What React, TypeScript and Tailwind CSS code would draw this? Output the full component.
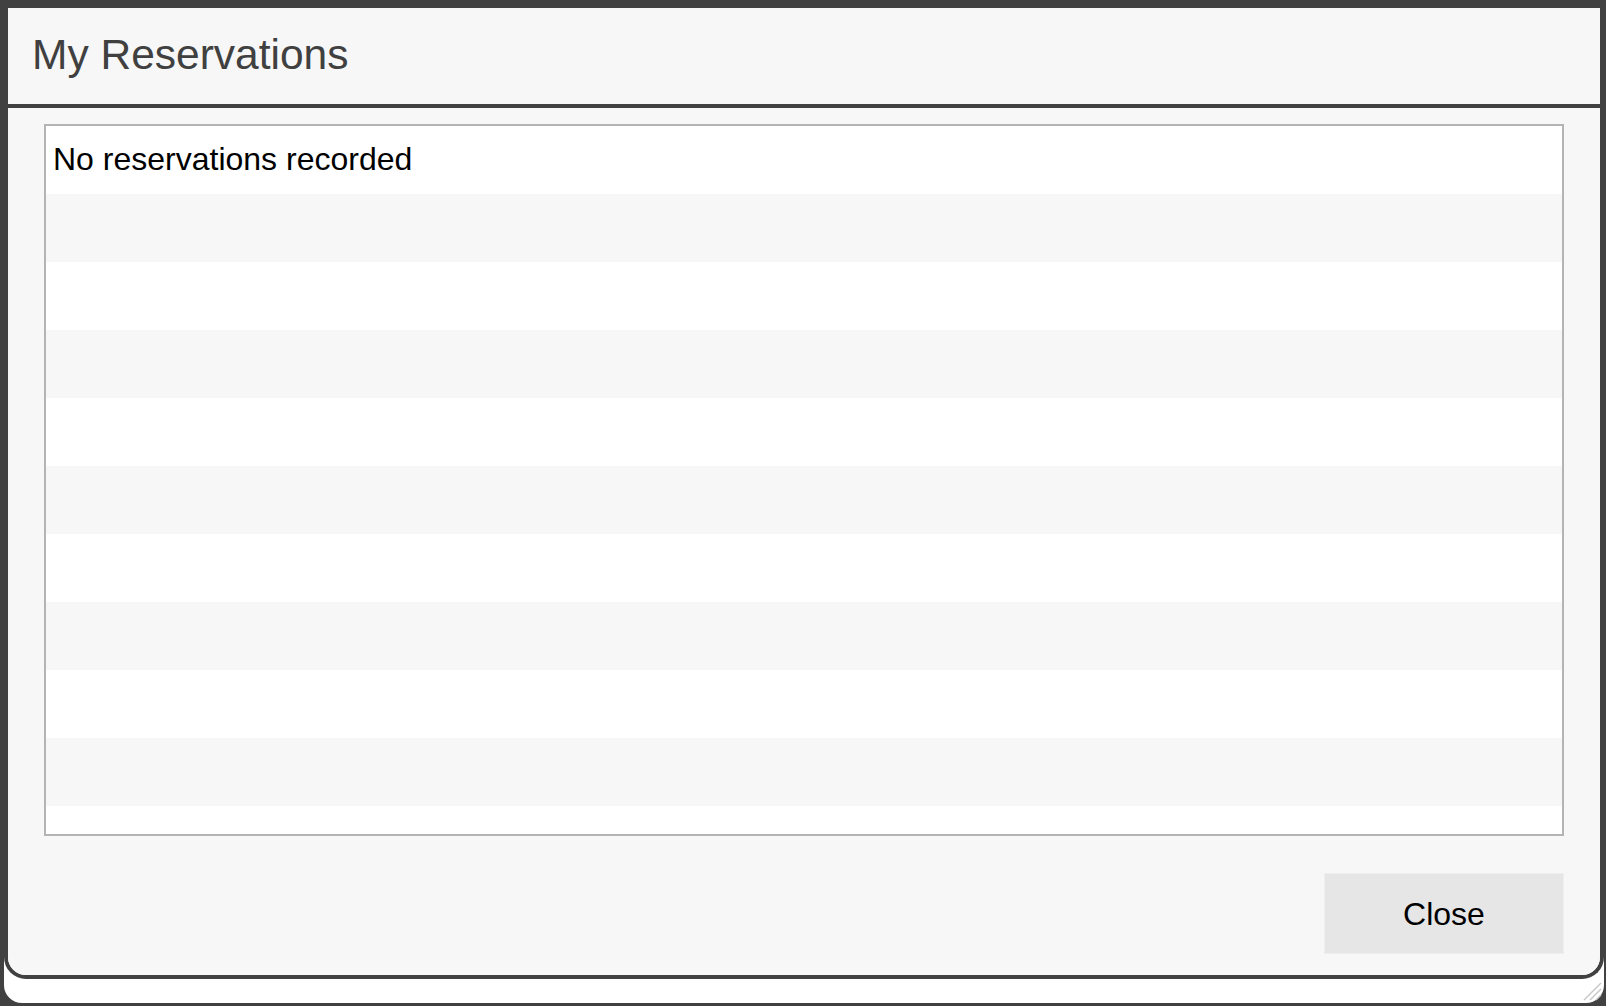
const rows = Array.from({ length: 11 }, (_, i) => i);

const ResizeGrip = () => (
	<svg className="absolute right-[2px] bottom-[2px] w-[22px] h-[22px]" viewBox="0 0 22 22">
		<line x1="4" y1="21" x2="21" y2="4" stroke="#c8c8c8" strokeWidth="1.5" />
		<line x1="10" y1="21" x2="21" y2="10" stroke="#c8c8c8" strokeWidth="1.5" />
		<line x1="16" y1="21" x2="21" y2="16" stroke="#c8c8c8" strokeWidth="1.5" />
	</svg>
);

export default function App() {
	return (
		<div
			className="w-[1606px] h-[1006px] bg-[#414141] pt-2 pl-1 pr-[2px] pb-[3px]"
			style={{ fontFamily: '"Liberation Sans", Arial, Helvetica, sans-serif' }}
		>
			{/* white panel behind the dialog */}
			<div className="relative h-full bg-white rounded-b-[18px] flex flex-col">
				<div className="h-[971px] flex flex-col border-x-4 border-b-4 border-[#414141] rounded-b-[22px] overflow-hidden">
					{/* Header */}
					<div className="h-[100px] shrink-0 bg-[#f7f7f7] border-b-4 border-[#414141] flex items-center pl-[24px] pb-[2px]">
						<h1 className="text-[42.5px] leading-none text-[#404040]">My Reservations</h1>
					</div>

					{/* Body */}
					<div className="flex-1 bg-[#f7f7f7] flex flex-col pt-4 pl-9 pr-9">
						<div className="h-[712px] border-2 border-[#b4b4b4] bg-white overflow-hidden">
							{rows.map((i) => (
								<div
									key={i}
									className={`h-[68px] flex items-center pl-[7px] pb-[2px] text-[32px] leading-none text-black ${
										i % 2 === 0 ? "bg-white" : "bg-[#f7f7f7]"
									}`}
								>
									{i === 0 ? "No reservations recorded" : null}
								</div>
							))}
						</div>

						<div className="flex justify-end mt-[37px]">
							<button className="w-[240px] h-[81px] bg-[#e6e6e6] border border-[#eeeeee] text-[32px] leading-none text-black">
								Close
							</button>
						</div>
					</div>
				</div>
				<ResizeGrip />
			</div>
		</div>
	);
}
